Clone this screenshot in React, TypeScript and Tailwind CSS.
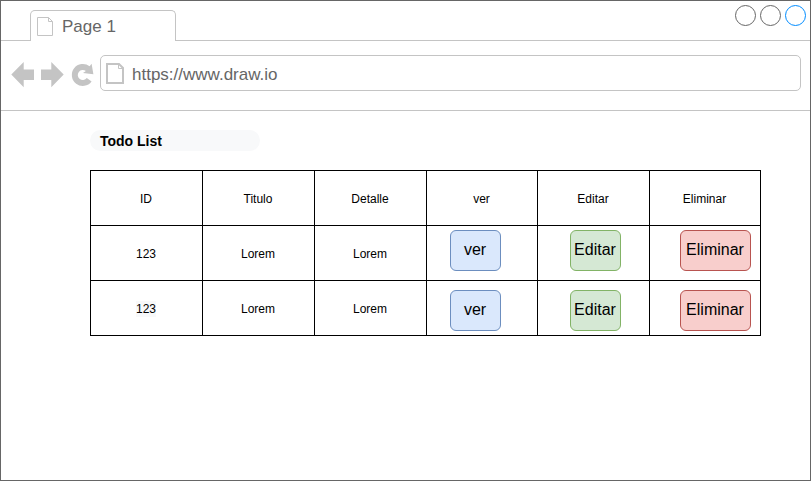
const headers = ["ID", "Titulo", "Detalle", "ver", "Editar", "Eliminar"];

const rows = [
  { id: "123", title: "Lorem", detail: "Lorem", marked: false, offset: "pt-1" },
  { id: "123", title: "Lorem", detail: "Lorem", marked: true, offset: "pt-[9px]" },
];

const cell = "flex border-r border-b border-black";
const centered = `${cell} items-center justify-center pt-0.5 pr-px`;
const button = "flex h-[41px] shrink-0 justify-center rounded-[6px] border pt-[7px] pr-px text-base leading-6";

function TabBar() {
  return (
    <div className="flex h-10 items-start justify-between border-b border-[#c4c4c4]">
      <div className="mt-[9px] ml-[29px] flex h-[31px] w-[146px] rounded-t-[5px] border border-b-0 border-[#c4c4c4] bg-white">
        <svg className="mt-1.5 ml-1.5 h-5 w-4" viewBox="0 0 16 20" fill="none" stroke="#c4c4c4">
          <path d="M.5 .5H11.5L15.5 4.5V18.5H.5ZM11.5 .5V4.5H15.5" />
        </svg>
        <span className="ml-[9px] pt-[5px] text-[17px] leading-[22px] text-[#666]">Page 1</span>
      </div>
      <div className="mt-1 mr-1 flex gap-1">
        <i className="size-[21px] rounded-full border border-[#666]" />
        <i className="size-[21px] rounded-full border border-[#666]" />
        <i className="size-[21px] rounded-full border border-[#008cff]" />
      </div>
    </div>
  );
}

function AddressBar() {
  return (
    <div className="flex h-[70px] items-start border-b border-[#c4c4c4] pt-3.5">
      <svg className="ml-2.5 h-[38px] w-[84px] shrink-0" viewBox="11 55 84 38" fill="#c4c4c4">
        <path d="M11.3 74.6L23.7 62V69.4H34V80H23.7V87.2Z" />
        <path d="M63.7 74.6L51.3 62V69.4H41V80H51.3V87.2Z" />
        <path d="M91.6 63.8L93.4 74.2L83 72.9L85.9 71.1A5 5 0 1 0 86.8 78L91.6 81.6A11 11 0 1 1 89.6 66.3Z" />
      </svg>
      <div className="ml-[5px] flex h-9 w-[701px] rounded-[5px] border border-[#c4c4c4]">
        <svg className="mt-[7px] ml-[5px] h-[21px] w-[18px]" viewBox="0 0 18 21" fill="none" stroke="#c4c4c4">
          <path d="M1 1H13L17 5V20H1Z" strokeWidth="2" />
          <path d="M12.5 1V5.5H17" />
        </svg>
        <span className="ml-2 pt-2 text-[17px] leading-[22px] text-[#666]">https://www.draw.io</span>
      </div>
    </div>
  );
}

export default function App() {
  return (
    <div className="h-[481px] w-[811px] overflow-hidden border border-[#666] bg-white font-['Liberation_Sans',Arial,sans-serif] text-black">
      <TabBar />
      <AddressBar />
      <main className="pt-[19px] pl-[89px]">
        <h1 className="h-[21px] w-[170px] rounded-full bg-[#f8f9fa] pl-2.5 text-sm leading-[23px] font-bold">Todo List</h1>
        <div className="mt-[19px] grid w-[671px] grid-cols-[112px_112px_112px_111px_112px_111px] auto-rows-[55px] border-t border-l border-black text-xs">
          {headers.map((h) => (
            <div key={h} className={centered}>{h}</div>
          ))}
          {rows.map((r, i) => (
            <div key={i} className="contents">
              <div className={centered}>
                <span className={r.marked ? "bg-[#f8f9fa]" : ""}>{r.id}</span>
              </div>
              <div className={centered}>{r.title}</div>
              <div className={centered}>{r.detail}</div>
              <div className={`${cell} ${r.offset} pl-[23px]`}>
                <button className={`${button} w-[51px] border-[#6c8ebf] bg-[#dae8fc]`}>ver</button>
              </div>
              <div className={`${cell} ${r.offset} pl-8`}>
                <button className={`${button} w-[51px] border-[#82b366] bg-[#d5e8d4]`}>Editar</button>
              </div>
              <div className={`${cell} ${r.offset} pl-[30px]`}>
                <button className={`${button} w-[71px] border-[#b85450] bg-[#f8cecc]`}>Eliminar</button>
              </div>
            </div>
          ))}
        </div>
      </main>
    </div>
  );
}
